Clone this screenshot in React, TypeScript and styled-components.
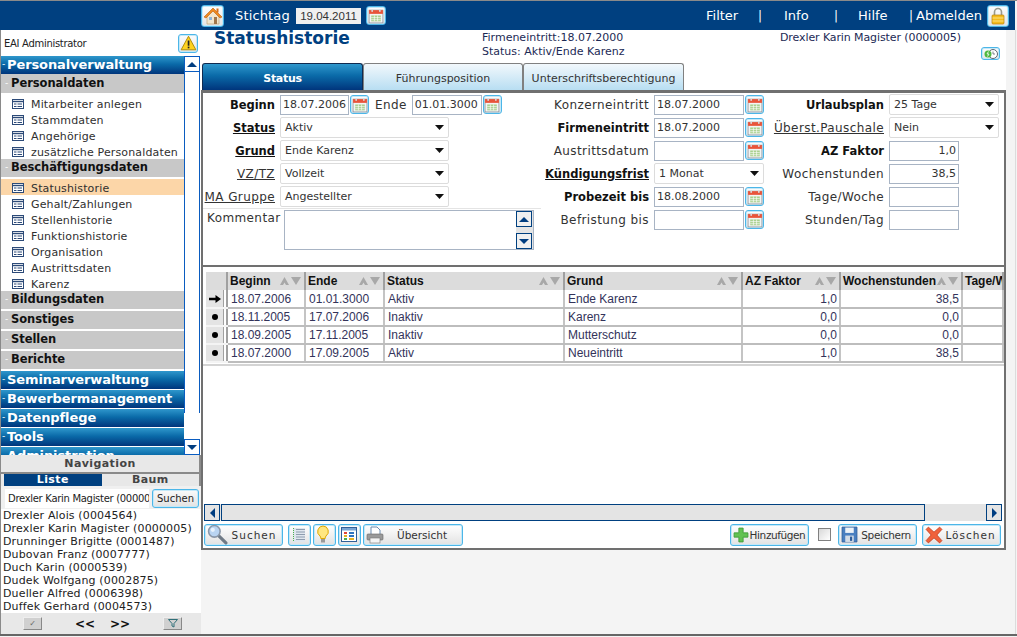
import React from "react";
import styled, { createGlobalStyle } from "styled-components";

const GlobalStyle = createGlobalStyle`
  html, body { margin: 0; padding: 0; height: 100%; overflow: hidden; background: #f4f4f4; }
  body { font-family: "DejaVu Sans", Verdana, sans-serif; font-size: 11px; color: #222; }
  #root { height: 100%; }
`;

const sans = `"DejaVu Sans", Verdana, sans-serif`;
const arial = `"Liberation Sans", Arial, sans-serif`;

/* ---------- icons ---------- */

const HomeIcon = () => (
  <svg width="20" height="20" viewBox="0 0 20 20">
    <path d="M4 9v9h12V9L10 4z" fill="#f3e6cc" stroke="#b99a6a" strokeWidth=".6" />
    <path d="M1 11 10 2l9 9-2 1-7-7-7 7z" fill="#f08a1d" stroke="#b85c10" strokeWidth=".6" />
    <rect x="13.5" y="2.5" width="2" height="4" fill="#d9701a" />
    <rect x="6" y="11" width="3" height="3" fill="#8fb4d8" />
    <rect x="11" y="11" width="3" height="7" fill="#a0764a" />
  </svg>
);

const CalendarIcon = () => (
  <svg width="16" height="16" viewBox="0 0 15 15">
    <rect x="1" y="2" width="13" height="12" fill="#f4f4f4" stroke="#8a8f96" strokeWidth=".7" />
    <rect x="1" y="2" width="13" height="3.5" fill="#e8543a" />
    <rect x="3.2" y="1" width="1.4" height="2.6" fill="#d9dde2" />
    <rect x="10.4" y="1" width="1.4" height="2.6" fill="#d9dde2" />
    <rect x="3" y="7" width="9" height="5.5" fill="#a9d08e" />
    <path d="M3 9h9M3 11h9M6 7v5.5M9 7v5.5" stroke="#fff" strokeWidth=".6" />
  </svg>
);

const WarningIcon = () => (
  <svg width="17" height="16" viewBox="0 0 15 14">
    <path d="M7.5 1 14 13H1z" fill="#ffd21f" stroke="#a88400" strokeWidth=".8" />
    <rect x="6.8" y="4.8" width="1.5" height="4.6" fill="#222" />
    <rect x="6.8" y="10.2" width="1.5" height="1.5" fill="#222" />
  </svg>
);

const LockIcon = () => (
  <svg width="16" height="18" viewBox="0 0 16 18">
    <path d="M4.5 8V5a3.5 3.5 0 0 1 7 0v3" fill="none" stroke="#9a9a8c" strokeWidth="1.6" />
    <rect x="2" y="8" width="12" height="9" rx="1" fill="#f4bb1e" stroke="#b5830c" strokeWidth=".7" />
    <path d="M2.5 11h11M2.5 14h11" stroke="#fbe27e" />
  </svg>
);

const GridIcon = () => (
  <svg width="12" height="10" viewBox="0 0 12 10">
    <rect x=".5" y=".5" width="11" height="9" fill="#fff" stroke="#2c4a78" />
    <path d="M1 2.500h10" stroke="#2c4a78" strokeWidth="1.400" />
    <path d="M2 5h2.500M2 7.500h2.500M5.500 5H10M5.500 7.500H10" stroke="#2c4a78" />
  </svg>
);

const ListIcon = () => (
  <svg width="16" height="16" viewBox="0 0 16 16">
    <rect x="2" y="1" width="12" height="14" fill="#dfe6ee" />
    <path d="M5 2.500h9M5 5h9M5 7.500h9M5 10h9M5 12.500h9" stroke="#8d9cae" />
    <path d="M2.500 1v14" stroke="#4cb04c" strokeDasharray="1 1" />
  </svg>
);

const BulbIcon = () => (
  <svg width="14" height="19" viewBox="0 0 14 19">
    <path d="M7 1a5.500 5.500 0 0 0-3 10c.6.6.8 1.400.8 2.500h4.400c0-1.100.2-1.900.8-2.500A5.500 5.500 0 0 0 7 1z" fill="#ffe680" stroke="#e0a800" />
    <rect x="5" y="14" width="4" height="3.500" fill="#9a9a9a" />
  </svg>
);

const OverviewIcon = () => (
  <svg width="16" height="15" viewBox="0 0 16 15">
    <rect x=".5" y=".5" width="15" height="14" fill="#fff" stroke="#2f5f98" />
    <rect x="1" y="1" width="14" height="2.500" fill="#7aa5d4" />
    <rect x="3" y="5" width="3" height="2" fill="#e0483a" />
    <rect x="8" y="5" width="5" height="2" fill="#2f74c0" />
    <rect x="3" y="8" width="3" height="2" fill="#e8b020" />
    <rect x="8" y="8" width="5" height="2" fill="#2f74c0" />
    <rect x="3" y="11" width="3" height="2" fill="#4cae4c" />
    <rect x="8" y="11" width="5" height="2" fill="#e8b020" />
  </svg>
);

const PrintIcon = () => (
  <svg width="18" height="18" viewBox="0 0 18 18">
    <path d="M5 1h6l3 3v5H5z" fill="#fff" stroke="#6c8cb0" />
    <rect x="1" y="8" width="16" height="6" rx="1" fill="#9a9a9a" stroke="#666" strokeWidth=".6" />
    <rect x="4" y="12" width="10" height="5" fill="#f4f4f4" stroke="#777" strokeWidth=".6" />
  </svg>
);

const SearchIcon = () => (
  <svg width="21" height="21" viewBox="0 0 20 20">
    <path d="m11 11 7 7" stroke="#6f7a86" strokeWidth="3" strokeLinecap="round" />
    <circle cx="7" cy="7" r="5.500" fill="#b9d4f2" stroke="#8a97a8" strokeWidth="1.500" />
    <circle cx="5.500" cy="5.500" r="2" fill="#e9f3fd" />
  </svg>
);

const PlusIcon = () => (
  <svg width="16" height="16" viewBox="0 0 15 15">
    <path d="M5.500 1h4v4.500H14v4H9.500V14h-4V9.500H1v-4h4.500z" fill="#62c252" stroke="#3d9a38" strokeWidth=".8" />
  </svg>
);

const SaveIcon = () => (
  <svg width="17" height="17" viewBox="0 0 16 16">
    <path d="M1 1h14v14H1z" fill="#4a7fc0" stroke="#2c5c9a" strokeWidth=".8" />
    <rect x="4" y="1.500" width="8" height="5" fill="#eef2f6" />
    <rect x="4" y="9" width="8" height="6" fill="#d4dce6" />
    <rect x="8.500" y="10" width="2" height="4" fill="#2c5c9a" />
  </svg>
);

const CrossIcon = () => (
  <svg width="18" height="18" viewBox="0 0 16 16">
    <path d="M3 1 8 5.500 13 1l2 2-4.500 5L15 13l-2 2-5-4.500L3 15l-2-2 4.500-5L1 3z" fill="#f0623c" stroke="#c8401f" strokeWidth=".8" />
  </svg>
);

const ClockIcon = () => (
  <svg width="16" height="12" viewBox="0 0 16 12">
    <circle cx="10" cy="6" r="4.500" fill="#fff" stroke="#5c6670" />
    <path d="M10 3.500V6h2" fill="none" stroke="#5c6670" strokeWidth=".8" />
    <circle cx="5" cy="6" r="3.500" fill="#4fb83f" />
    <path d="M5.500 3.500 4 6h2L4.500 8.500" fill="none" stroke="#fff" strokeWidth=".8" />
  </svg>
);

const RowArrow = () => (
  <svg width="12" height="10" viewBox="0 0 12 10">
    <path d="M0 3.800h6.500V1L12 5 6.500 9V6.200H0z" fill="#000" />
  </svg>
);

const RowDot = () => (
  <svg width="6" height="6" viewBox="0 0 6 6">
    <circle cx="3" cy="3" r="3" fill="#000" />
  </svg>
);

const Triangle = ({ dir, color = "#003d80" }: { dir: "up" | "down" | "left" | "right"; color?: string }) => {
  const points = { up: "0,6 5,1 10,6", down: "0,1 10,1 5,6", left: "6,0 6,10 1,5", right: "1,0 1,10 6,5" }[dir];
  const horizontal = dir === "up" || dir === "down";
  return (
    <svg width={horizontal ? 10 : 7} height={horizontal ? 7 : 10} viewBox={horizontal ? "0 0 10 7" : "0 0 7 10"}>
      <polygon points={points} fill={color} />
    </svg>
  );
};

const SortArrows = () => (
  <SortBox>
    <svg width="21" height="8" viewBox="0 0 21 8">
      <polygon points="0,8 4.500,0 9,8 6,8 4.500,5.500 3,8" fill="#a8a8a8" />
      <polygon points="11,0 21,0 16,8" fill="#a8a8a8" />
    </svg>
  </SortBox>
);

/* ---------- page frame ---------- */

const Page = styled.div`
  width: 1017px;
  height: 637px;
  display: flex;
  flex-direction: column;
  overflow: hidden;
  background: #f4f4f4;
  border-top: 1px solid #8a8a8a;
  box-sizing: border-box;
`;

const TopBar = styled.header`
  height: 29px;
  flex: none;
  background: #004080;
  color: #fff;
  display: flex;
  align-items: center;
  padding-left: 201px;
  margin-right: 2px;
  font-size: 13px;
`;

const IconButton = styled.button<{ $w?: number; $h?: number; $ml?: number }>`
  width: ${(p) => p.$w ?? 21}px;
  height: ${(p) => p.$h ?? 21}px;
  flex: none;
  margin-left: ${(p) => p.$ml ?? 0}px;
  padding: 0;
  display: inline-flex;
  align-items: center;
  justify-content: center;
  box-sizing: border-box;
  border: 1px solid #4cb6e8;
  border-radius: 3px;
  box-shadow: inset 0 0 0 1px #c4e8f8;
  background: linear-gradient(#fdfdfd, #e4e4e4);
`;

const StichtagLabel = styled.span`
  margin-left: 11px;
  width: 61px;
  letter-spacing: 0.15px;
`;

const StichtagValue = styled.span`
  width: 65px;
  height: 16px;
  margin-right: 5px;
  background: #f0f0f0;
  color: #333;
  font: 11.5px/16px ${arial};
  text-align: center;
`;

const TopLinks = styled.nav`
  margin-left: auto;
  display: flex;
  align-items: center;
  padding-right: 6px;
`;

const TopLink = styled.span<{ $w: number }>`
  width: ${(p) => p.$w}px;
  white-space: nowrap;
`;

const Bar = styled.span<{ $w: number }>`
  width: ${(p) => p.$w}px;
  white-space: nowrap;
  font-size: 12px;
`;

const Body = styled.div`
  height: 604px;
  width: 1016px;
  flex: none;
  box-sizing: border-box;
  display: flex;
  border-right: 1px solid #dcdcdc;
`;

const BottomLine = styled.div`
  height: 2px;
  flex: none;
  background: #666;
`;

/* ---------- sidebar ---------- */

const Sidebar = styled.aside`
  width: 201px;
  flex: none;
  display: flex;
  flex-direction: column;
  background: #fff;
  border-left: 1px solid #8a8a8a;
  box-sizing: border-box;
`;

const UserRow = styled.div`
  height: 26px;
  flex: none;
  display: flex;
  align-items: center;
  justify-content: space-between;
  padding: 0 3px 0 3px;
  font: 10px ${sans};
  letter-spacing: -0.3px;
  color: #222;
`;

const MenuFrame = styled.div`
  height: 399px;
  flex: none;
  display: flex;
  overflow: hidden;
`;

const Menu = styled.div`
  width: 183px;
  flex: none;
  overflow: hidden;
`;

const ScrollTrack = styled.div`
  width: 16px;
  flex: none;
  display: flex;
  flex-direction: column;
  height: 100%;
`;

const ScrollRail = styled.div`
  height: 341px;
  flex: none;
  border-left: 1px solid #0a5cc0;
  border-right: 1px solid #0a5cc0;
  margin-bottom: auto;
`;

const ScrollButton = styled.div`
  width: 16px;
  height: 16px;
  flex: none;
  box-sizing: border-box;
  border: 1px solid #0a5cc0;
  background: #fff;
  display: flex;
  align-items: center;
  justify-content: center;
`;

const ModuleRow = styled.div<{ $gap?: number }>`
  height: 18px;
  padding-bottom: 2px;
  box-sizing: border-box;
  margin-bottom: ${(p) => p.$gap ?? 1}px;
  display: flex;
  align-items: center;
  background: linear-gradient(#2f97cc, #0a6aa8 45%, #00357c);
  color: #fff;
  font: bold 13px ${sans};
  letter-spacing: -0.1px;
  white-space: nowrap;
`;

const GroupRow = styled.div<{ $gap?: number; $h?: number }>`
  height: ${(p) => p.$h ?? 18}px;
  padding-bottom: 2px;
  box-sizing: border-box;
  margin-bottom: ${(p) => p.$gap ?? 0}px;
  display: flex;
  align-items: center;
  background: #c8c8c8;
  color: #111;
  font: bold 11.5px ${sans};
  letter-spacing: -0.05px;
  white-space: nowrap;
`;

const Dash = styled.span<{ $w: number }>`
  width: ${(p) => p.$w}px;
  flex: none;
  color: #fff;
  font-size: 9px;
  font-weight: normal;
  padding-left: ${(p) => (p.$w > 8 ? 4 : 1)}px;
  box-sizing: border-box;
`;

const ItemList = styled.ul`
  list-style: none;
  margin: 0;
  padding: 2px 0 0;
`;

const Item = styled.li<{ $active?: boolean }>`
  height: 16px;
  padding: 2px 0 0 11px;
  box-sizing: border-box;
  display: flex;
  align-items: center;
  gap: 7px;
  background: ${(p) => (p.$active ? "#fcd6a8" : "transparent")};
  font: 11px ${sans};
  letter-spacing: 0.15px;
  color: #303030;
  white-space: nowrap;
`;

const NavTitle = styled.div`
  height: 17px;
  flex: none;
  background: #e8e8e8;
  border-right: 2px solid #8a8a8a;
  border-bottom: 2px solid #8a8a8a;
  color: #444;
  font: bold 11px ${sans};
  letter-spacing: 0.4px;
  text-align: center;
  line-height: 17px;
`;

const NavTabs = styled.div`
  height: 12px;
  flex: none;
  display: flex;
  padding-left: 3px;
  background: #e8e8e8;
  border-right: 2px solid #8a8a8a;
`;

const NavTab = styled.div<{ $active?: boolean }>`
  flex: 1;
  text-align: center;
  font: bold 11px ${sans};
  line-height: 12px;
  letter-spacing: 0.4px;
  background: ${(p) => (p.$active ? "#004080" : "#e8e8e8")};
  color: ${(p) => (p.$active ? "#fff" : "#444")};
`;

const SearchRow = styled.div`
  height: 23px;
  flex: none;
  box-sizing: border-box;
  display: flex;
  align-items: center;
  gap: 3px;
  padding: 1px 1px 0 4px;
  background: #f0f0f0;
`;

const SearchValue = styled.div`
  width: 144px;
  height: 19px;
  flex: none;
  background: #fff;
  overflow: hidden;
  white-space: nowrap;
  padding-left: 3px;
  box-sizing: border-box;
  font: 10px/19px ${sans};
  letter-spacing: -0.3px;
  color: #222;
`;

const SearchButton = styled.button`
  width: 47px;
  height: 19px;
  padding: 0;
  border: 1px solid #4cb6e8;
  border-radius: 3px;
  box-shadow: inset 0 0 0 1px #c4e8f8;
  background: linear-gradient(#fafafa, #e2e2e2);
  font: 10px ${sans};
  color: #222;
`;

const PersonList = styled.ul`
  list-style: none;
  height: 104px;
  flex: none;
  margin: 0;
  padding: 0 0 0 2px;
  overflow: hidden;
  font: 11px/13px ${sans};
  letter-spacing: 0.15px;
  color: #222;
  white-space: nowrap;
`;

const NavFooter = styled.div`
  flex: 1;
  display: flex;
  align-items: center;
  background: #e8e8e8;
  padding-left: 22px;
  font: bold 12px ${sans};
  color: #111;
`;

const FooterButton = styled.div<{ $ml?: number }>`
  width: 19px;
  height: 13px;
  margin-left: ${(p) => p.$ml ?? 0}px;
  box-sizing: border-box;
  background: #d0d0d0;
  border: 1px solid;
  border-color: #eee #888 #888 #eee;
  display: flex;
  align-items: center;
  justify-content: center;
  color: #666;
  font-size: 8px;
`;

const Pager = styled.span<{ $ml: number }>`
  width: 20px;
  margin-left: ${(p) => p.$ml}px;
  text-align: center;
`;

/* ---------- main ---------- */

const Main = styled.main`
  width: 805px;
  flex: none;
  display: flex;
  flex-direction: column;
`;

const MainHead = styled.div`
  height: 33px;
  flex: none;
  background: #fff;
  display: flex;
  color: #1c2a55;
  font: 11px/14px ${sans};
`;

const PageTitle = styled.h1`
  width: 281px;
  margin: 0;
  padding-left: 13px;
  box-sizing: border-box;
  font: bold 17px/17px ${sans};
  color: #004080;
`;

const HeadInfo = styled.div`
  width: 298px;
  padding-top: 1px;
  white-space: nowrap;
`;

const HeadPerson = styled.div`
  flex: 1;
  padding: 1px 6px 0 0;
  display: flex;
  flex-direction: column;
  letter-spacing: -0.1px;
  white-space: nowrap;
  gap: 2px;
`;

const ClockButton = styled(IconButton).attrs({ $w: 19, $h: 13 })`
  align-self: flex-end;
`;

const TabBar = styled.div`
  height: 27px;
  flex: none;
  display: flex;
  padding-left: 1px;
  background: #fff;
  align-items: stretch;
`;

const Tab = styled.div<{ $active?: boolean; $w: number }>`
  width: ${(p) => p.$w}px;
  box-sizing: border-box;
  border: 1px solid #808080;
  border-bottom: 0;
  border-radius: 3px 3px 0 0;
  text-align: center;
  font: ${(p) => (p.$active ? "bold" : "normal")} 11px/29px ${sans};
  letter-spacing: ${(p) => (p.$active ? "-0.3px" : "0")};
  color: ${(p) => (p.$active ? "#fff" : "#333")};
  background: ${(p) =>
    p.$active ? "linear-gradient(#2f97cc, #0a6aa8 45%, #00357c)" : "linear-gradient(#f2f8fc, #b8def2)"};
  ${(p) => (p.$active ? "border-color: #102a50; border-width: 1px 1px 2px;" : "")}
`;

const Sheet = styled.div`
  flex: none;
  height: 460px;
  box-sizing: border-box;
  display: flex;
  flex-direction: column;
  background: #fff;
  border: 2px solid #707070;
  border-top-width: 3px;
`;

const FormArea = styled.section`
  height: 174px;
  flex: none;
  display: grid;
  grid-template-columns: 338px 230px 1fr;
  box-sizing: border-box;
  border-bottom: 2px solid #707070;
`;

const FormColumn = styled.div`
  display: flex;
  flex-direction: column;
`;

const FormRow = styled.div<{ $labelWidth: number }>`
  height: 23px;
  flex: none;
  display: grid;
  grid-template-columns: ${(p) => p.$labelWidth}px auto;
  justify-content: start;
  column-gap: 5px;
  align-items: center;
`;

const Label = styled.label<{ $bold?: boolean; $link?: boolean }>`
  text-align: right;
  white-space: nowrap;
  font: ${(p) => (p.$bold ? "bold 11.5px" : "normal 12px")} ${sans};
  letter-spacing: ${(p) => (p.$bold ? "0" : "0.4px")};
  color: ${(p) => (p.$bold ? "#111" : "#333")};
  text-decoration: ${(p) => (p.$link ? "underline" : "none")};
`;

const FieldGroup = styled.div`
  display: flex;
  align-items: center;
  gap: 1px;
`;

const Input = styled.div<{ $w: number; $right?: boolean }>`
  width: ${(p) => p.$w}px;
  height: 20px;
  box-sizing: border-box;
  border: 1px solid #a8b4c4;
  background: #fff;
  padding: 0 2px;
  font: 11px/18px ${sans};
  color: #333;
  text-align: ${(p) => (p.$right ? "right" : "left")};
  white-space: nowrap;
`;

const Select = styled.div<{ $w: number }>`
  width: ${(p) => p.$w}px;
  height: 21px;
  box-sizing: border-box;
  border: 1px solid #dcdcdc;
  border-radius: 2px;
  background: #fff;
  padding: 0 4px;
  display: flex;
  align-items: center;
  justify-content: space-between;
  font: 11px ${sans};
  color: #333;
`;

const CalButton = styled(IconButton).attrs({ $w: 19, $h: 19 })``;

const EndLabel = styled.span`
  margin: 0 4px 0 5px;
  font: 12px ${sans};
  letter-spacing: 0.4px;
  color: #333;
`;

const CommentRow = styled.div`
  flex: none;
  height: 43px;
  width: 338px;
  padding-top: 1px;
  box-sizing: border-box;
  border-top: 1px solid #e4e4e4;
  display: flex;
`;

const CommentLabel = styled.span`
  width: 81px;
  padding: 1px 0 0 4px;
  box-sizing: border-box;
  font: 12px/14px ${sans};
  letter-spacing: 0.4px;
  color: #333;
`;

const CommentBox = styled.div`
  width: 250px;
  height: 40px;
  box-sizing: border-box;
  border: 1px solid #a8b4c4;
  background: #fff;
  display: flex;
  justify-content: flex-end;
`;

const CommentScroll = styled.div`
  width: 17px;
  background: #e4e4e4;
  display: flex;
  flex-direction: column;
  justify-content: space-between;
`;

const BoxScrollButton = styled.div`
  width: 16px;
  height: 16px;
  box-sizing: border-box;
  border: 1px solid #004080;
  background: #f0f0f0;
  display: flex;
  align-items: center;
  justify-content: center;
`;

const TableArea = styled.section`
  flex: 1;
  min-height: 0;
  position: relative;
  display: flex;
  flex-direction: column;
  padding: 5px 0 0 3px;
  overflow: hidden;
`;

const TableWrap = styled.div`
  flex: 1;
  min-height: 0;
  overflow: hidden;
`;

const Table = styled.table`
  border-collapse: collapse;
  table-layout: fixed;
  width: 797px;
  font: 12px ${arial};
`;

const HeadCell = styled.th<{ $w: number }>`
  width: ${(p) => p.$w}px;
  height: 18px;
  box-sizing: border-box;
  padding: 0 2px;
  background: #dcdcdc;
  border-right: 2px solid #a0a0a0;
  text-align: left;
  font: bold 12px ${arial};
  color: #111;
  white-space: nowrap;
  overflow: hidden;
  position: relative;
`;

const SortBox = styled.span`
  position: absolute;
  right: 3px;
  top: 5px;
  display: flex;
`;

const Cell = styled.td<{ $right?: boolean }>`
  height: 18px;
  box-sizing: border-box;
  padding: 0 2px 0 3px;
  border-right: 2px solid #c4c4c4;
  border-bottom: 2px solid #bdbdbd;
  color: #33335a;
  text-align: ${(p) => (p.$right ? "right" : "left")};
  white-space: nowrap;
  overflow: hidden;
`;

const MarkerCell = styled.td`
  height: 18px;
  box-sizing: border-box;
  padding: 0 3px 0 0;
  background: linear-gradient(90deg, #e4e4e4 17px, #a0a0a0 17px, #a0a0a0 18px, #fff 18px);
  border-right: 2px solid #a0a0a0;
  border-bottom: 2px solid #f4f4f4;
  text-align: center;
  line-height: 0;
`;

const TableEnd = styled.div`
  position: absolute;
  left: 0;
  right: 0;
  top: 97px;
  border-top: 2px solid #d4d4d4;
`;

const HScroll = styled.div`
  height: 17px;
  flex: none;
  display: flex;
  align-items: stretch;
  background: #e4e4e4;
  margin: 0 2px 0 -2px;
`;

const HScrollButton = styled.div`
  width: 16px;
  box-sizing: border-box;
  border: 1px solid #004080;
  display: flex;
  align-items: center;
  justify-content: center;
`;

const HScrollThumb = styled.div`
  width: 704px;
  margin-left: 1px;
  box-sizing: border-box;
  border: 1px solid #004080;
  background: #e4e4e4;
  margin-right: auto;
`;

const Toolbar = styled.footer`
  height: 27px;
  flex: none;
  display: flex;
  align-items: center;
  padding: 0 3px 0 1px;
  box-sizing: border-box;
  background: #fff;
`;

const ToolButton = styled.button<{ $w: number; $ml?: number }>`
  width: ${(p) => p.$w}px;
  height: 22px;
  flex: none;
  margin-left: ${(p) => p.$ml ?? 0}px;
  padding: 0 2px;
  display: flex;
  align-items: center;
  border: 1px solid #4cb6e8;
  border-radius: 3px;
  box-shadow: inset 0 0 0 1px #c4e8f8;
  background: linear-gradient(#ffffff, #e2e2e2);
  font: 10.5px ${sans};
  color: #333;
  white-space: nowrap;
`;

const ToolText = styled.span<{ $spacing?: number }>`
  flex: 1;
  text-align: center;
  letter-spacing: ${(p) => p.$spacing ?? 0}px;
`;

const CheckBox = styled.span`
  width: 13px;
  height: 13px;
  flex: none;
  margin-left: 9px;
  box-sizing: border-box;
  border: 1px solid #808080;
  background: linear-gradient(135deg, #d8d8d8, #fff);
`;

/* ---------- data ---------- */

const personalItems = ["Mitarbeiter anlegen", "Stammdaten", "Angehörige", "zusätzliche Personaldaten"];
const employmentItems = [
  "Statushistorie",
  "Gehalt/Zahlungen",
  "Stellenhistorie",
  "Funktionshistorie",
  "Organisation",
  "Austrittsdaten",
  "Karenz",
];
const persons = [
  "Drexler Alois (0004564)",
  "Drexler Karin Magister (0000005)",
  "Drunninger Brigitte (0001487)",
  "Dubovan Franz (0007777)",
  "Duch Karin (0000539)",
  "Dudek Wolfgang (0002875)",
  "Dueller Alfred (0006398)",
  "Duffek Gerhard (0004573)",
];
const columns = [
  { name: "Beginn", w: 78 },
  { name: "Ende", w: 79 },
  { name: "Status", w: 180 },
  { name: "Grund", w: 178 },
  { name: "AZ Faktor", w: 98 },
  { name: "Wochenstunden", w: 122 },
  { name: "Tage/Woche", w: 41 },
];
const history = [
  ["18.07.2006", "01.01.3000", "Aktiv", "Ende Karenz", "1,0", "38,5"],
  ["18.11.2005", "17.07.2006", "Inaktiv", "Karenz", "0,0", "0,0"],
  ["18.09.2005", "17.11.2005", "Inaktiv", "Mutterschutz", "0,0", "0,0"],
  ["18.07.2000", "17.09.2005", "Aktiv", "Neueintritt", "1,0", "38,5"],
];

const SelectArrow = () => (
  <svg width="9" height="5" viewBox="0 0 9 5">
    <polygon points="0,0 9,0 4.500,5" fill="#111" />
  </svg>
);

const DateField = ({ value = "", w = 90 }: { value?: string; w?: number }) => (
  <FieldGroup>
    <Input $w={w}>{value}</Input>
    <CalButton>
      <CalendarIcon />
    </CalButton>
  </FieldGroup>
);

const SelectField = ({ value, w }: { value: string; w: number }) => (
  <Select $w={w}>
    {value}
    <SelectArrow />
  </Select>
);

export default function App() {
  return (
    <>
      <GlobalStyle />
      <Page>
        <TopBar>
          <IconButton $w={23} $h={22}>
            <HomeIcon />
          </IconButton>
          <StichtagLabel>Stichtag</StichtagLabel>
          <StichtagValue>19.04.2011</StichtagValue>
          <IconButton $w={20} $h={19}>
            <CalendarIcon />
          </IconButton>
          <TopLinks>
            <TopLink $w={52}>Filter</TopLink>
            <Bar $w={26}>|</Bar>
            <TopLink $w={50}>Info</TopLink>
            <Bar $w={24}>|</Bar>
            <TopLink $w={51}>Hilfe</TopLink>
            <Bar $w={7}>|</Bar>
            <TopLink $w={64}>Abmelden</TopLink>
            <IconButton $w={22} $h={22} $ml={7}>
              <LockIcon />
            </IconButton>
          </TopLinks>
        </TopBar>
        <Body>
          <Sidebar>
            <UserRow>
              EAI Administrator
              <IconButton $w={20} $h={19}>
                <WarningIcon />
              </IconButton>
            </UserRow>
            <MenuFrame>
              <Menu>
                <ModuleRow $gap={0}>
                  <Dash $w={6}>-</Dash>Personalverwaltung
                </ModuleRow>
                <GroupRow $h={19}>
                  <Dash $w={10}>-</Dash>Personaldaten
                </GroupRow>
                <ItemList>
                  {personalItems.map((item) => (
                    <Item key={item}>
                      <GridIcon />
                      {item}
                    </Item>
                  ))}
                </ItemList>
                <GroupRow>
                  <Dash $w={10}>-</Dash>Beschäftigungsdaten
                </GroupRow>
                <ItemList>
                  {employmentItems.map((item, i) => (
                    <Item key={item} $active={i === 0}>
                      <GridIcon />
                      {item}
                    </Item>
                  ))}
                </ItemList>
                {["Bildungsdaten", "Sonstiges", "Stellen", "Berichte"].map((g) => (
                  <GroupRow key={g} $gap={2}>
                    <Dash $w={10}>-</Dash>
                    {g}
                  </GroupRow>
                ))}
                {["Seminarverwaltung", "Bewerbermanagement", "Datenpflege", "Tools", "Administration"].map((m) => (
                  <ModuleRow key={m}>
                    <Dash $w={6}>-</Dash>
                    {m}
                  </ModuleRow>
                ))}
              </Menu>
              <ScrollTrack>
                <ScrollButton>
                  <Triangle dir="up" />
                </ScrollButton>
                <ScrollRail />
                <ScrollButton>
                  <Triangle dir="down" />
                </ScrollButton>
              </ScrollTrack>
            </MenuFrame>
            <NavTitle>Navigation</NavTitle>
            <NavTabs>
              <NavTab $active>Liste</NavTab>
              <NavTab>Baum</NavTab>
            </NavTabs>
            <SearchRow>
              <SearchValue>Drexler Karin Magister (0000005)</SearchValue>
              <SearchButton>Suchen</SearchButton>
            </SearchRow>
            <PersonList>
              {persons.map((p) => (
                <li key={p}>{p}</li>
              ))}
            </PersonList>
            <NavFooter>
              <FooterButton>✓</FooterButton>
              <Pager $ml={33}>&lt;&lt;</Pager>
              <Pager $ml={15}>&gt;&gt;</Pager>
              <FooterButton $ml={33}>
                <svg width="10" height="9" viewBox="0 0 10 9">
                  <path d="M.5.5h9L6 4.500V8L4 7V4.500z" fill="none" stroke="#2f6f78" />
                </svg>
              </FooterButton>
            </NavFooter>
          </Sidebar>
          <Main>
            <MainHead>
              <PageTitle>Statushistorie</PageTitle>
              <HeadInfo>
                Firmeneintritt:18.07.2000
                <br />
                Status: Aktiv/Ende Karenz
              </HeadInfo>
              <HeadPerson>
                Drexler Karin Magister (0000005)
                <ClockButton>
                  <ClockIcon />
                </ClockButton>
              </HeadPerson>
            </MainHead>
            <TabBar>
              <Tab $active $w={161}>Status</Tab>
              <Tab $w={160}>Führungsposition</Tab>
              <Tab $w={161}>Unterschriftsberechtigung</Tab>
            </TabBar>
            <Sheet>
              <FormArea>
                <FormColumn>
                  <FormRow $labelWidth={72}>
                    <Label $bold>Beginn</Label>
                    <FieldGroup>
                      <DateField value="18.07.2006" w={69} />
                      <EndLabel>Ende</EndLabel>
                      <DateField value="01.01.3000" w={70} />
                    </FieldGroup>
                  </FormRow>
                  <FormRow $labelWidth={72}>
                    <Label $bold $link>Status</Label>
                    <SelectField value="Aktiv" w={169} />
                  </FormRow>
                  <FormRow $labelWidth={72}>
                    <Label $bold $link>Grund</Label>
                    <SelectField value="Ende Karenz" w={169} />
                  </FormRow>
                  <FormRow $labelWidth={72}>
                    <Label $link>VZ/TZ</Label>
                    <SelectField value="Vollzeit" w={169} />
                  </FormRow>
                  <FormRow $labelWidth={72}>
                    <Label $link>MA Gruppe</Label>
                    <SelectField value="Angestellter" w={169} />
                  </FormRow>
                  <CommentRow>
                    <CommentLabel>Kommentar</CommentLabel>
                    <CommentBox>
                      <CommentScroll>
                        <BoxScrollButton>
                          <Triangle dir="up" />
                        </BoxScrollButton>
                        <BoxScrollButton>
                          <Triangle dir="down" />
                        </BoxScrollButton>
                      </CommentScroll>
                    </CommentBox>
                  </CommentRow>
                </FormColumn>
                <FormColumn>
                  <FormRow $labelWidth={108}>
                    <Label>Konzerneintritt</Label>
                    <DateField value="18.07.2000" />
                  </FormRow>
                  <FormRow $labelWidth={108}>
                    <Label $bold>Firmeneintritt</Label>
                    <DateField value="18.07.2000" />
                  </FormRow>
                  <FormRow $labelWidth={108}>
                    <Label>Austrittsdatum</Label>
                    <DateField />
                  </FormRow>
                  <FormRow $labelWidth={108}>
                    <Label $bold $link>Kündigungsfrist</Label>
                    <SelectField value="1 Monat" w={110} />
                  </FormRow>
                  <FormRow $labelWidth={108}>
                    <Label $bold>Probezeit bis</Label>
                    <DateField value="18.08.2000" />
                  </FormRow>
                  <FormRow $labelWidth={108}>
                    <Label>Befristung bis</Label>
                    <DateField />
                  </FormRow>
                </FormColumn>
                <FormColumn>
                  <FormRow $labelWidth={113}>
                    <Label $bold>Urlaubsplan</Label>
                    <SelectField value="25 Tage" w={110} />
                  </FormRow>
                  <FormRow $labelWidth={113}>
                    <Label $link>Überst.Pauschale</Label>
                    <SelectField value="Nein" w={110} />
                  </FormRow>
                  <FormRow $labelWidth={113}>
                    <Label $bold>AZ Faktor</Label>
                    <Input $w={70} $right>1,0</Input>
                  </FormRow>
                  <FormRow $labelWidth={113}>
                    <Label>Wochenstunden</Label>
                    <Input $w={70} $right>38,5</Input>
                  </FormRow>
                  <FormRow $labelWidth={113}>
                    <Label>Tage/Woche</Label>
                    <Input $w={70} $right />
                  </FormRow>
                  <FormRow $labelWidth={113}>
                    <Label>Stunden/Tag</Label>
                    <Input $w={70} $right />
                  </FormRow>
                </FormColumn>
              </FormArea>
              <TableArea>
                <TableWrap>
                  <Table>
                    <thead>
                      <tr>
                        <HeadCell $w={21} />
                        {columns.map((c) => (
                          <HeadCell key={c.name} $w={c.w}>
                            {c.name}
                            {c.name !== "Tage/Woche" && <SortArrows />}
                          </HeadCell>
                        ))}
                      </tr>
                    </thead>
                    <tbody>
                      {history.map((row, i) => (
                        <tr key={row[0]}>
                          <MarkerCell>{i === 0 ? <RowArrow /> : <RowDot />}</MarkerCell>
                          {row.map((v, j) => (
                            <Cell key={j} $right={j > 3}>{v}</Cell>
                          ))}
                          <Cell />
                        </tr>
                      ))}
                    </tbody>
                  </Table>
                </TableWrap>
                <TableEnd />
                <HScroll>
                  <HScrollButton>
                    <Triangle dir="left" />
                  </HScrollButton>
                  <HScrollThumb />
                  <HScrollButton>
                    <Triangle dir="right" />
                  </HScrollButton>
                </HScroll>
              </TableArea>
              <Toolbar>
                <ToolButton $w={79}>
                  <SearchIcon />
                  <ToolText $spacing={1}>Suchen</ToolText>
                </ToolButton>
                <ToolButton $w={23} $ml={5}>
                  <ListIcon />
                </ToolButton>
                <ToolButton $w={23} $ml={2}>
                  <BulbIcon />
                </ToolButton>
                <ToolButton $w={23} $ml={2}>
                  <OverviewIcon />
                </ToolButton>
                <ToolButton $w={100} $ml={2}>
                  <PrintIcon />
                  <ToolText>Übersicht</ToolText>
                </ToolButton>
                <ToolButton $w={79} $ml={267}>
                  <PlusIcon />
                  <ToolText $spacing={-0.4}>Hinzufügen</ToolText>
                </ToolButton>
                <CheckBox />
                <ToolButton $w={79} $ml={7}>
                  <SaveIcon />
                  <ToolText $spacing={-0.3}>Speichern</ToolText>
                </ToolButton>
                <ToolButton $w={79} $ml={5}>
                  <CrossIcon />
                  <ToolText $spacing={1}>Löschen</ToolText>
                </ToolButton>
              </Toolbar>
            </Sheet>
          </Main>
        </Body>
        <BottomLine />
      </Page>
    </>
  );
}
